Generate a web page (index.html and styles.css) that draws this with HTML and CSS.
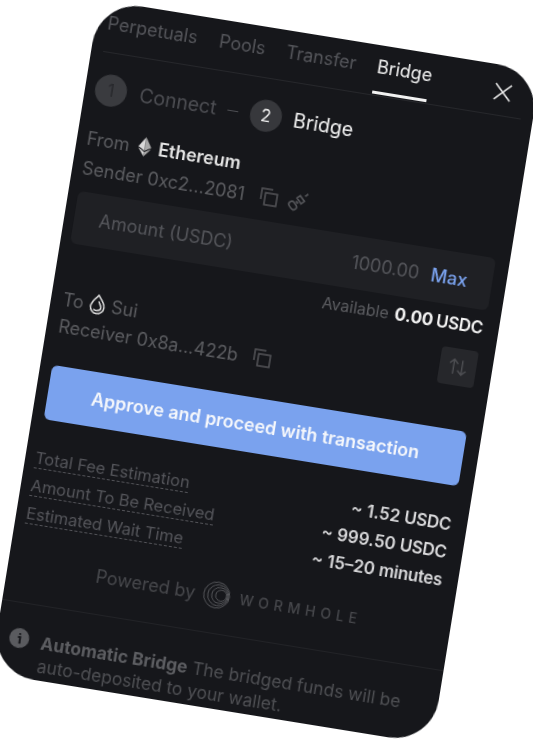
FILE: index.html
```html
<!DOCTYPE html>
<html lang="en">
<head>
<meta charset="utf-8">
<title>Bridge</title>
<link rel="stylesheet" href="styles.css">
</head>
<body>
<main class="card">
  <nav class="tabs">
    <span class="tab">Perpetuals</span>
    <span class="tab">Pools</span>
    <span class="tab">Transfer</span>
    <span class="tab tab-active">Bridge</span>
    <svg class="close" viewBox="0 0 18 18"><path d="M1 1l16 16M17 1L1 17"/></svg>
  </nav>
  <div class="stepper">
    <span class="step step-done">1</span>
    <span class="step-label-dim">Connect</span>
    <span class="step-dash"></span>
    <span class="step step-now">2</span>
    <span class="step-label">Bridge</span>
  </div>
  <div class="line from-line">
    <span class="dim">From</span>
    <svg class="eth" viewBox="0 0 16 24"><path class="eth-a" d="M8 0L0 12.2 8 16.8z"/><path class="eth-b" d="M8 0l8 12.2-8 4.6z"/><path class="eth-a" d="M8 18.6L0 13.8 8 24z"/><path class="eth-b" d="M8 18.6l8-4.8L8 24z"/></svg>
    <strong class="chain">Ethereum</strong>
  </div>
  <div class="line">
    <span class="dim">Sender 0xc2...2081</span>
    <svg class="ico copy-first" viewBox="0 0 20 20"><path d="M6 6h12v12H6z"/><path d="M13 2H2v11"/></svg>
    <svg class="ico plug" viewBox="0 0 20 20"><path d="M11.500 4l4.500 4.500-2.600 2.600-4.500-4.500zM7 11l2 2a2.600 2.600 0 0 1-3.800 3.800l-2-2A2.600 2.600 0 0 1 7 11zM8.500 9.500l2 2M16 4l2.500-2.500"/></svg>
  </div>
  <div class="amount">
    <span class="amount-label">Amount (USDC)</span>
    <span class="amount-value">1000.00</span>
    <span class="max">Max</span>
  </div>
  <div class="split">
    <div class="to-col">
      <div class="line">
        <span class="dim">To</span>
        <svg class="sui" viewBox="0 0 20 24"><path d="M10 1.5c2.5 3 7.5 7.600 7.500 13a7.500 7.500 0 0 1-15 0C2.500 9.500 7.500 4.500 10 1.500z"/><path d="M11 8c.8 3.500 4 4.500 3 8-1 2.500-5 3.500-8 1.500"/></svg>
        <span class="dim sui-name">Sui</span>
      </div>
      <div class="line">
        <span class="dim">Receiver 0x8a...422b</span>
        <svg class="ico copy-second" viewBox="0 0 20 20"><path d="M6 6h12v12H6z"/><path d="M13 2H2v11"/></svg>
      </div>
    </div>
    <div class="avail-col">
      <div class="available">
        <span class="dim-small">Available</span>
        <b class="num">0.00</b><b class="unit">USDC</b>
      </div>
      <button class="swap" type="button" aria-label="Swap">
        <svg viewBox="0 0 20 20"><path d="M6 17V3M2 7l4-4 4 4M14 3v14M10 13l4 4 4-4"/></svg>
      </button>
    </div>
  </div>
  <button class="proceed" type="button">Approve and proceed with transaction</button>
  <div class="stats">
    <div class="stat"><span class="stat-name">Total Fee Estimation</span><span class="stat-value">~ 1.52 <small>USDC</small></span></div>
    <div class="stat"><span class="stat-name">Amount To Be Received</span><span class="stat-value">~ 999.50 <small>USDC</small></span></div>
    <div class="stat"><span class="stat-name">Estimated Wait Time</span><span class="stat-value">~ 15–20 <small>minutes</small></span></div>
  </div>
  <div class="powered">
    <span class="powered-by">Powered by</span>
    <svg class="hole" viewBox="0 0 28 28"><circle cx="14" cy="14" r="13"/><circle cx="15.500" cy="14" r="10.500"/><circle cx="17" cy="14" r="8"/><circle cx="18.500" cy="14" r="5.500"/></svg>
    <span class="wormhole">WORMHOLE</span>
  </div>
  <footer class="note">
    <svg class="info" viewBox="0 0 20 20"><circle cx="10" cy="10" r="10"/><path d="M8.500 9h2.300v5.500h1.200M10.300 5v1.800"/></svg>
    <p class="note-text"><b>Automatic Bridge</b> The bridged funds will be auto-deposited to your wallet.</p>
  </footer>
</main>
</body>
</html>
```
FILE: styles.css
```css
* { box-sizing: border-box; }
html, body { margin: 0; height: 740px; background: #fff; overflow: hidden; }
body { display: flex; align-items: center; justify-content: center; font-family: Inter, "Noto Sans", sans-serif; }
.card {
  flex: none; width: 447px; height: 682px; margin: 4px 0 0 -2px;
  background: #16171b; border-radius: 44px; color: #f2f2f2;
  transform: rotate(9.2deg); filter: blur(0.35px);
  display: flex; flex-direction: column; overflow: hidden;
  font-size: 18px;
}
.tabs { display: flex; align-items: flex-start; height: 51px; margin: 0 12px; border-bottom: 1px solid #26272b; padding-top: 11px; flex: none; }
.tab { color: #55565b; margin-right: 21px; line-height: 22px; position: relative; }
.tab:nth-child(1) { width: 92px; }
.tab-active { color: #f2f2f2; margin-right: 0; }
.tab-active::after { content: ""; position: absolute; left: -1px; right: 2px; top: 35px; height: 3px; background: #f2f2f2; }
.close { width: 18px; height: 18px; margin: 7px 13px 0 auto; fill: none; stroke: #f2f2f2; stroke-width: 1.600; }
.stepper { display: flex; align-items: center; margin: 21px 0 0 10px; height: 32px; font-size: 19.500px; flex: none; }
.step { width: 32px; height: 32px; border-radius: 50%; display: flex; align-items: center; justify-content: center; font-size: 17px; flex: none; }
.step-done { background: #3a3b3f; color: #28292d; }
.step-now { background: #37383c; color: #f2f2f2; }
.step-label-dim { color: #4d4e53; margin-left: 13px; }
.step-dash { width: 11px; height: 1px; background: #4d4e53; margin: 0 12px 0 11px; }
.step-label { margin-left: 12px; }
.line { display: flex; align-items: center; height: 30px; flex: none; }
.from-line { margin-top: 19px; }
.card > .line { margin-left: 10px; }
.dim { color: #5c5d61; }
.eth { width: 13px; height: 20px; margin: 0 7px 0 9px; }
.eth-a { fill: #d9d9d9; }
.eth-b { fill: #a8a8a8; }
.chain { font-weight: 600; font-size: 18px; color: #e4e4e4; }
.ico { width: 20px; height: 20px; fill: none; stroke: #55565a; stroke-width: 1.500; flex: none; }
.copy-first { margin-left: 15px; }
.plug { width: 22px; height: 22px; margin-left: 8px; }
.copy-second { margin-left: 14px; }
.amount { display: flex; align-items: center; height: 53px; margin: 9px 14px 0 10px; padding: 0 25px 0 25px; background: #1f2024; border-radius: 6px; flex: none; color: #55565b; }
.amount-label { margin-right: auto; }
.max { color: #7aa2ee; font-weight: 500; margin-left: 12px; }
.split { display: flex; justify-content: space-between; margin: 8px 16px 0 12px; height: 92px; flex: none; }
.to-col { padding-top: 34.500px; }
.to-col .line { height: 27px; }
.sui { width: 18px; height: 23px; margin: 0 5px; fill: none; stroke: #e0e0e0; stroke-width: 1.700; }
.avail-col { display: flex; flex-direction: column; align-items: flex-end; }
.available { display: flex; align-items: baseline; height: 24px; }
.dim-small { color: #5c5d61; font-size: 16px; margin-right: 6px; }
.num { font-size: 17px; font-weight: 700; margin-right: 3px; }
.unit { font-size: 17px; font-weight: 600; letter-spacing: -0.3px; }
.swap { width: 37px; height: 37px; margin-top: 10px; border: 0; padding: 8px; border-radius: 4px; background: #26272b; }
.swap svg { display: block; width: 21px; height: 21px; fill: none; stroke: #4d4e52; stroke-width: 1.400; }
.proceed { display: block; flex: none; margin: 23px 15px 0 12px; height: 55px; background: #7aa2ee; color: #f5f7fb; border: 0; border-radius: 6px; font: 600 18px Inter, sans-serif; }
.stats { margin: 25px 16px 0 10px; flex: none; }
.stat { display: flex; justify-content: space-between; align-items: center; height: 28px; }
.stat-name { color: #55565b; font-size: 16.500px; line-height: 20px; border-bottom: 1px dashed #55565b; }
.stat-value { color: #d8d8da; font-size: 17px; font-weight: 600; }
.stat-value small { font-size: 17px; font-weight: 600; letter-spacing: -0.3px; }
.powered { display: flex; align-items: center; justify-content: center; height: 30px; margin-top: 22px; flex: none; }
.powered-by { color: #47484c; font-size: 18px; margin-right: 8px; }
.hole { width: 28px; height: 28px; fill: none; stroke: #55565a; stroke-width: 1; }
.wormhole { color: #47484c; font-size: 14px; font-weight: 500; letter-spacing: 5px; margin-left: 9px; }
.note { display: flex; align-items: flex-start; gap: 12px; margin-top: 23px; border-top: 1px solid #222327; padding: 25px 20px 0 13px; flex: none; }
.info { width: 20px; height: 20px; flex: none; }
.info circle { fill: #5a5b5f; }
.info path { fill: none; stroke: #17181c; stroke-width: 2; }
.note-text { margin: 0; color: #4f5054; line-height: 23px; font-size: 17.500px; }
.note-text b { font-weight: 700; color: #5c5d61; }
```
